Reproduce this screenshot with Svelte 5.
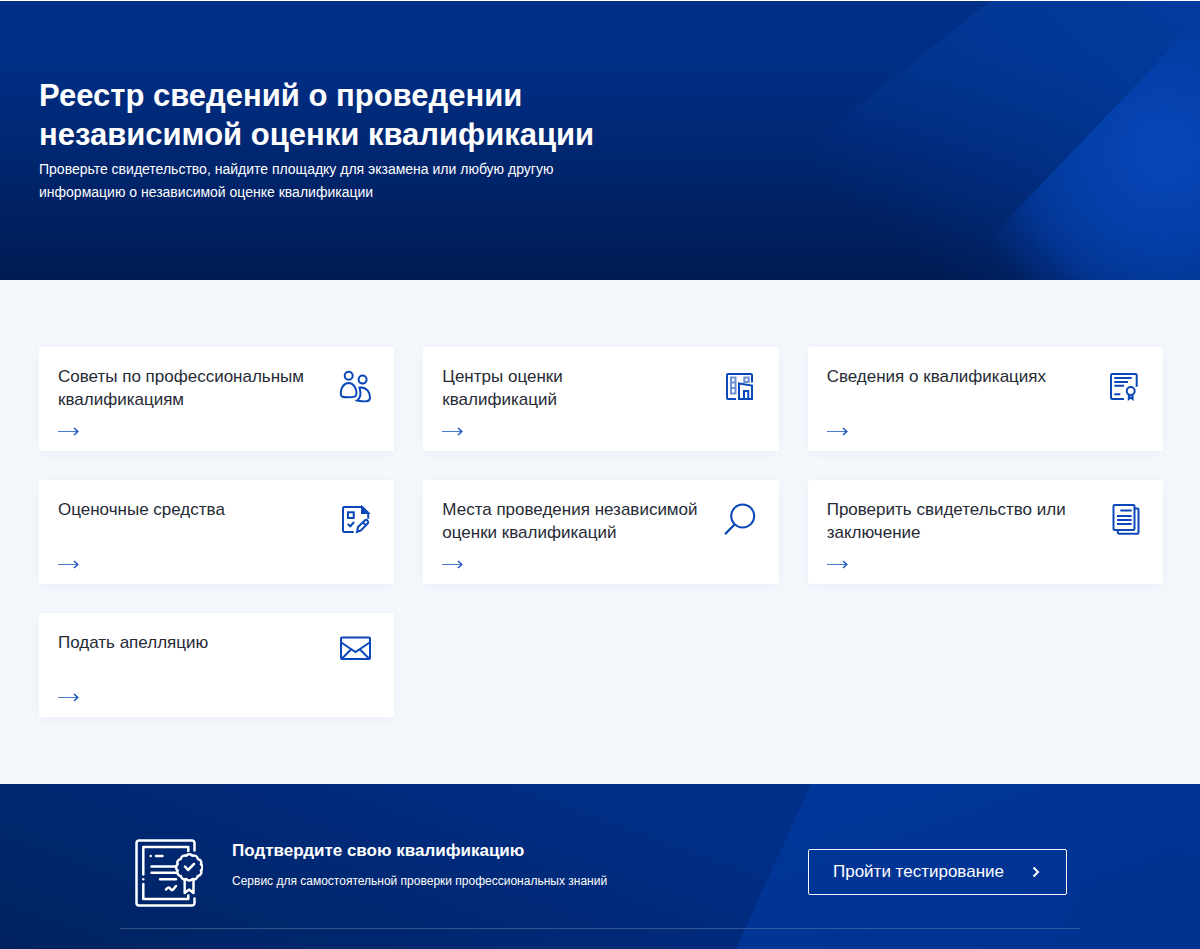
<script>
  const cards = [
    { title: "Советы по профессиональным квалификациям", icon: "people" },
    { title: "Центры оценки\nквалификаций", icon: "center" },
    { title: "Сведения о квалификациях", icon: "certificate" },
    { title: "Оценочные средства", icon: "assessment" },
    { title: "Места проведения независимой оценки квалификаций", icon: "search" },
    { title: "Проверить свидетельство или заключение", icon: "documents" },
    { title: "Подать апелляцию", icon: "mail" },
  ];

  // scalloped edge of the seal
  const sealPoints = 12;
  let seal = "";
  for (let i = 0; i <= sealPoints; i++) {
    const a = (i * 2 * Math.PI) / sealPoints + Math.PI / sealPoints;
    const x = (54.3 + 12 * Math.cos(a)).toFixed(2);
    const y = (28.4 + 12 * Math.sin(a)).toFixed(2);
    seal += i === 0 ? `M${x} ${y}` : `A3.8 3.8 0 0 1 ${x} ${y}`;
  }
</script>

<header class="hero">
  <svg class="hero-bg" viewBox="0 0 1200 279" preserveAspectRatio="xMaxYMin slice" aria-hidden="true">
    <defs>
      <linearGradient id="band" gradientUnits="userSpaceOnUse" x1="1160" y1="0" x2="930" y2="270">
        <stop offset="0" stop-color="#023b9d" />
        <stop offset="1" stop-color="#023b9d" stop-opacity="0" />
      </linearGradient>
      <radialGradient id="glow" gradientUnits="userSpaceOnUse" cx="1165" cy="150" r="200">
        <stop offset="0" stop-color="#0846b8" />
        <stop offset="0.4" stop-color="#0440ab" />
        <stop offset="0.7" stop-color="#03399c" stop-opacity="0.85" />
        <stop offset="1" stop-color="#023088" stop-opacity="0" />
      </radialGradient>
    </defs>
    <path d="M990 0H1200V279H640Z" fill="url(#band)" />
    <path d="M1200 17V279H950Z" fill="url(#glow)" />
  </svg>
  <div class="hero-text">
    <h1>Реестр сведений о проведении независимой оценки квалификации</h1>
    <p>Проверьте свидетельство, найдите площадку для экзамена или любую другую информацию о независимой оценке квалификации</p>
  </div>
</header>

<main class="cards">
  {#each cards as card}
    <a class="card" href="#{card.icon}">
      <span class="card-body">
        <span class="card-title">{card.title}</span>
        <svg class="arrow" viewBox="0 0 21 9" aria-hidden="true">
          <path d="M0 4.5H19.5" />
          <path d="M16 1l3.8 3.5L16 8" class="arrow-head" />
        </svg>
      </span>
      <svg class="icon" viewBox="0 0 32 32" aria-hidden="true">
        {#if card.icon === "people"}
          <circle cx="9.7" cy="4.7" r="4" />
          <circle cx="23.6" cy="8.6" r="4" />
          <path d="M9.7 12C4.500 12 1.700 17.500 1.700 22S4 26.300 9.500 26.300s8-.3 8-4.300S15 12 9.700 12Z" />
          <path d="M20.500 16.500C28 15.500 31 22 31 26.500S27 31 18 29.500C22.500 26.500 22 21.500 20.500 16.500Z" />
        {:else if card.icon === "center"}
          <path d="M12 28H4a1 1 0 0 1-1-1V4a1 1 0 0 1 1-1H27a1 1 0 0 1 1 1v7.600" />
          <g class="light">
            <path d="M7 6.500h4.500v16H7ZM7 11.500h4.500M7 17h4.500M20.300 6.500h4.400v4.400h-4.400Z" />
          </g>
          <path d="M15 28V12.500l13 2V28ZM20 28v-8h4.300v8" />
        {:else if card.icon === "certificate"}
          <path d="M16 28H4.200A1.200 1.200 0 0 1 3 26.800V4.200A1.200 1.200 0 0 1 4.200 3h23.300a1.200 1.200 0 0 1 1.200 1.200v11.500" />
          <path d="M6.300 7h17.400M6.300 11H20M6.300 14.700H16M6.300 23.300h6" />
          <circle cx="22.700" cy="20" r="4" />
          <path d="M20.800 23.500V28l1.900-1.500 1.900 1.500v-4.500" />
        {:else if card.icon === "assessment"}
          <path d="M14.700 28H5.200A1.200 1.200 0 0 1 4 26.800V4.200A1.200 1.200 0 0 1 5.200 3h18l6 6v5.700" />
          <path d="M23 3v6h6.200Z" class="solid" />
          <path d="M9 8.300h5.700V14H9ZM8.700 20l2.600 2.300L15 18" />
          <path d="M18 28l1-5 7-6.700q1.200-1 2.500.3t.3 2.700L22 26.500ZM24 18.500l2.700 2.700" />
        {:else if card.icon === "search"}
          <circle cx="18.700" cy="12" r="11.500" />
          <path d="M10 21l-8.300 8.500" class="handle" />
        {:else if card.icon === "documents"}
          <rect x="5.500" y="1" width="21" height="25" rx="1.300" />
          <path d="M27 4.500h2.300a1.200 1.200 0 0 1 1.200 1.200v22.800a1.200 1.200 0 0 1-1.200 1.200H11a1.200 1.200 0 0 1-1.200-1.200V26M12.300 6.500h11.400M9 12h14.700M9 16h14.700M9 20h14.700" />
        {:else}
          <rect x="2" y="0.5" width="29" height="21.500" rx="1" />
          <path d="M2.300 5.500 16.500 15 30.700 5.500M3 21.500l9-9M30 21.500l-9-9" />
        {/if}
      </svg>
    </a>
  {/each}
</main>

<footer class="footer">
  <svg class="footer-bg" viewBox="0 0 1200 165" preserveAspectRatio="xMaxYMin slice" aria-hidden="true">
    <defs>
      <linearGradient id="panel" x1="0" y1="0" x2="1" y2="1">
        <stop offset="0" stop-color="#00379b" />
        <stop offset="1" stop-color="#00328f" />
      </linearGradient>
    </defs>
    <path d="M811 0H1200V165H736Z" fill="url(#panel)" />
    <path d="M1105 40 1052 165H1200V70Z" fill="#00308c" fill-opacity="0.25" />
  </svg>
  <div class="footer-inner">
    <svg class="diploma" viewBox="0 0 68 68" aria-hidden="true">
      <path d="M59.500 11.500V4a2.500 2.500 0 0 0-2.500-2.500H4A2.500 2.500 0 0 0 1.500 4v60A2.500 2.500 0 0 0 4 66.500h53a2.500 2.500 0 0 0 2.500-2.500v-4.500" />
      <path d="M53.300 12V8h-45v27.500M8.300 40.300h.01M8.300 45v15h45v-3.500" />
      <path d="M15.700 17h.01M21 17h6.500M16.500 27.500H41M16.500 33.800h25M25 40.200h16" />
      <path d="M31 50.500c2-3 3.500-2.500 4.500-.5s2.500 1 3.500-.5l2-2.500" />
      <path d={seal} />
      <path d="M50 27.500l3 3.500 6-6M49.700 41v13l4.400-3.500 4.400 3.500V41" />
    </svg>
    <div class="footer-text">
      <h2>Подтвердите свою квалификацию</h2>
      <p>Сервис для самостоятельной проверки профессиональных знаний</p>
    </div>
    <a class="test-link" href="#test">
      Пройти тестирование
      <svg viewBox="0 0 8 12" aria-hidden="true"><path d="M1.500 1.500 6 6l-4.500 4.500" /></svg>
    </a>
  </div>
</footer>

<style>
  :global(body) {
    background: #f4f7fc;
    font-family: "Liberation Sans", Arial, sans-serif;
  }

  h1,
  h2,
  p {
    margin: 0;
  }

  .hero {
    position: relative;
    border-top: 1px solid #fff;
    padding: 75px 39px 76px;
    color: #fff;
    background: linear-gradient(#002f87 20%, #001b53);
  }

  .hero-bg,
  .footer-bg {
    position: absolute;
    inset: 0;
    width: 100%;
    height: 100%;
  }

  .hero-text {
    position: relative;
    max-width: 560px;
  }

  h1 {
    font-size: 31px;
    line-height: 39px;
    margin-bottom: 4px;
  }

  .hero p {
    max-width: 540px;
    font-size: 14px;
    line-height: 23px;
  }

  .cards {
    display: grid;
    grid-template-columns: repeat(3, 1fr);
    grid-auto-rows: 104px;
    gap: 29px;
    padding: 67px 37px 67px 39px;
  }

  .card {
    display: flex;
    justify-content: space-between;
    padding: 18px 23px 15px 19px;
    background: #fff;
    border-radius: 2px;
    box-shadow: 0 2px 14px rgba(30, 70, 130, 0.04);
    color: #262a35;
    text-decoration: none;
  }

  .card-body {
    display: flex;
    flex-direction: column;
    justify-content: space-between;
    max-width: 264px;
  }

  .card-title {
    font-size: 17px;
    line-height: 23px;
    white-space: pre-line;
  }

  .arrow {
    flex: none;
    width: 21px;
    height: 9px;
    fill: none;
    stroke: #4a7ad0;
  }

  .arrow-head {
    stroke: #1650be;
    stroke-width: 1.4;
  }

  .icon {
    flex: none;
    width: 32px;
    height: 32px;
    margin-top: 6px;
    fill: none;
    stroke: #0a47b8;
    stroke-width: 2;
    overflow: visible;
  }

  .light {
    opacity: 0.6;
  }

  .solid {
    fill: #0a47b8;
  }

  .handle {
    stroke-width: 2.4;
    stroke-linecap: round;
  }

  .footer {
    position: relative;
    min-height: 165px;
    color: #fff;
    background: linear-gradient(20deg, #00225f, #002f88 65%);
  }

  .footer-inner {
    position: relative;
    display: flex;
    align-items: flex-start;
    box-sizing: border-box;
    max-width: 960px;
    margin: 0 auto;
    padding: 55px 13px 21px 14px;
    border-bottom: 1px solid rgba(255, 255, 255, 0.2);
  }

  .diploma {
    flex: none;
    width: 68px;
    height: 68px;
    margin: 0 29px 0 1px;
    fill: none;
    stroke: #fff;
    stroke-width: 2.5;
    stroke-linecap: round;
    stroke-linejoin: round;
  }

  .footer-text {
    flex: 1;
  }

  h2 {
    font-size: 17px;
    line-height: 23px;
    margin-bottom: 9px;
  }

  .footer-text p {
    font-size: 12px;
    line-height: 20px;
  }

  .test-link {
    display: flex;
    align-items: center;
    gap: 28px;
    box-sizing: border-box;
    height: 46px;
    margin-top: 10px;
    padding: 0 26px 0 24px;
    border: 1px solid #fff;
    border-radius: 2px;
    color: #fff;
    font-size: 17px;
    text-decoration: none;
  }

  .test-link svg {
    width: 8px;
    height: 12px;
    fill: none;
    stroke: #fff;
    stroke-width: 2;
  }
</style>
